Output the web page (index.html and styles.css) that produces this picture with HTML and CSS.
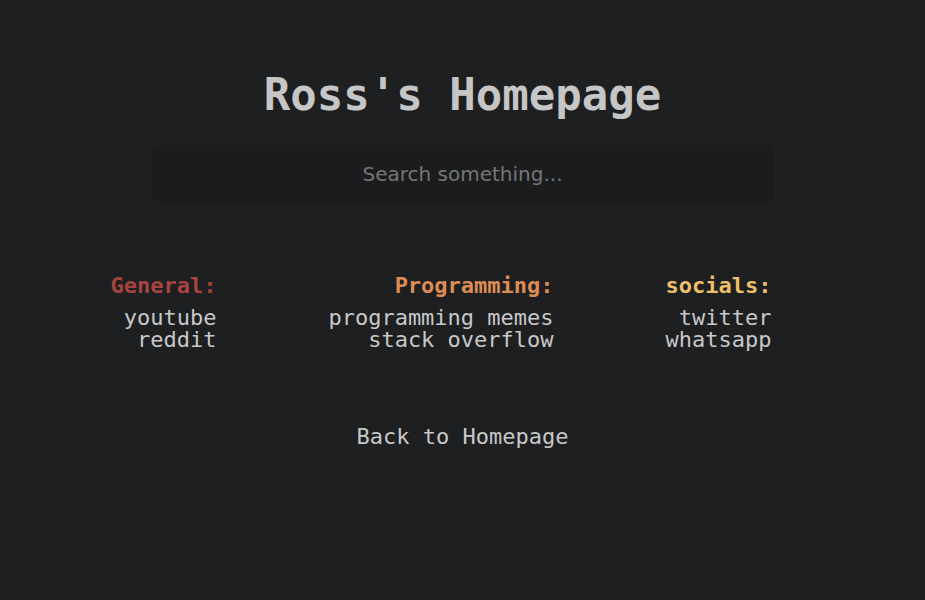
FILE: index.html
```html
<!DOCTYPE html>
<html>
<head>
<meta charset="utf-8">
<title>Ross's Homepage</title>
<link rel="stylesheet" href="styles.css">
</head>
<body>
<main class="page">
  <h1 class="title">Ross's Homepage</h1>
  <div class="search"><input class="search-input" type="text" placeholder="Search something..."></div>
  <div class="links">
    <div class="group">
      <div class="heading general">General:</div>
      <a class="link" href="#">youtube</a>
      <a class="link" href="#">reddit</a>
    </div>
    <div class="group">
      <div class="heading programming">Programming:</div>
      <a class="link" href="#">programming memes</a>
      <a class="link" href="#">stack overflow</a>
    </div>
    <div class="group">
      <div class="heading socials">socials:</div>
      <a class="link" href="#">twitter</a>
      <a class="link" href="#">whatsapp</a>
    </div>
  </div>
  <a class="back" href="#">Back to Homepage</a>
</main>
</body>
</html>
```

FILE: styles.css
```css
html, body {
  margin: 0;
  padding: 0;
  background: #1e1f21;
  height: 100%;
}
.page {
  display: flex;
  flex-direction: column;
  align-items: center;
  font-family: "DejaVu Sans Mono", monospace;
  color: #c8c8c8;
  padding-top: 66px;
}
.title {
  margin: 0;
  font-size: 44px;
  font-weight: bold;
  line-height: 58px;
  color: #c5c6c5;
}
.search {
  margin-top: 22px;
  width: 620px;
}
.search-input {
  box-sizing: border-box;
  width: 100%;
  height: 55px;
  background: #1b1c1e;
  border: 1px solid #18191b;
  border-radius: 4px;
  outline: none;
  text-align: center;
  font-family: "DejaVu Sans", sans-serif;
  font-size: 20px;
  color: #c8c8c8;
}
.search-input::placeholder {
  color: #767676;
}
.links {
  width: 661px;
  padding-right: 43px;
  margin-top: 74px;
  display: flex;
  justify-content: space-between;
}
.group {
  display: flex;
  flex-direction: column;
  align-items: flex-end;
  text-align: right;
}
.heading {
  font-size: 22px;
  font-weight: bold;
  line-height: 22px;
  margin-bottom: 10px;
}
.general { color: #a8443f; }
.programming { color: #de8c56; }
.socials { color: #eec06a; }
.link {
  font-size: 22px;
  line-height: 22px;
  color: #c8c8c8;
  text-decoration: none;
}
.back {
  margin-top: 75px;
  font-size: 22px;
  line-height: 22px;
  color: #c8c8c8;
  text-decoration: none;
}
```
